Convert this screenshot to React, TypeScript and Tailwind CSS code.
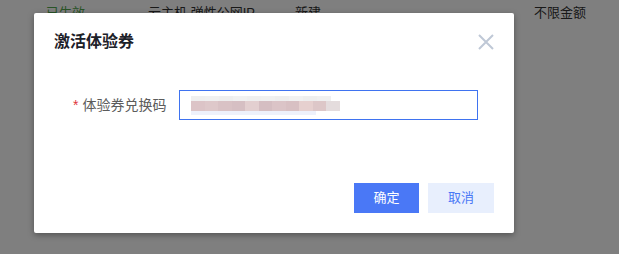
import React from 'react';

const font = { fontFamily: '"Liberation Sans", "Noto Sans CJK SC", sans-serif' };

const mosaicTop = ['#efefef', '#f0f0f0', '#eeeeee', '#f1f1f1', '#efefef', '#f0f0f0', '#eeeeee', '#f1f1f1', '#eeeeee', '#f0f0f0'];
const mosaicMid = ['#dcc4c7', '#dec8ca', '#d9c2c5', '#d6bfc3', '#e3cfd0', '#d5bec2', '#dbc4c7', '#d8c0c3', '#e6d0cf', '#ddc7c8', '#e4dcdd'];

const CodeMosaic: React.FC = () => {
  return (
    <div className="flex flex-col blur-[0.6px]">
      <div className="flex h-[5px]">
        {mosaicTop.map((c, i) => (
          <div key={i} className="w-[14px]" style={{ backgroundColor: c }} />
        ))}
      </div>
      <div className="flex h-[10px]">
        {mosaicMid.map((c, i) => (
          <div key={i} className="w-[13.5px]" style={{ backgroundColor: c }} />
        ))}
      </div>
      <div className="h-[4px] w-[125px] bg-[#eef1fb]" />
    </div>
  );
};

export default function App() {
  return (
    <div className="relative h-[254px] w-[619px] overflow-hidden bg-white" style={font}>
      {/* Page behind the modal */}
      <div className="flex h-[26px] items-center text-[13px] text-[#333]">
        <span className="ml-[46px] text-[#52a84e]">已生效</span>
        <span className="ml-[63px]">云主机 弹性公网IP</span>
        <span className="ml-[40px]">新建</span>
        <span className="ml-[213px]">不限金额</span>
      </div>

      {/* Backdrop */}
      <div className="absolute inset-0 bg-black/50">
        <div className="ml-[34px] mt-[13px] flex h-[220px] w-[480px] flex-col rounded-[2px] bg-white shadow-[0_2px_6px_rgba(0,0,0,0.35)]">
          <div className="flex items-start justify-between pl-5 pr-5 pt-[18px]">
            <h2 className="text-[16px] font-semibold leading-[22px] text-[#1d2129]">激活体验券</h2>
            <button type="button" className="mt-[3px] h-4 w-4 text-[#bfc8d6]">
              <svg viewBox="0 0 16 16" className="h-4 w-4" fill="none" stroke="currentColor" strokeWidth="2">
                <path d="M1 1 L15 15 M15 1 L1 15" />
              </svg>
            </button>
          </div>

          <div className="mt-[37px] flex items-center pl-[39px]">
            <span className="mr-[4px] text-[14px] text-[#e0363b]">*</span>
            <label className="text-[14px] text-[#5c5c5c]">体验券兑换码</label>
            <div className="ml-[13px] flex h-[30px] w-[299px] items-center border border-[#3f73f0] pl-[11px]">
              <CodeMosaic />
            </div>
          </div>

          <div className="mt-auto flex justify-end gap-[9px] pb-5 pr-5">
            <button type="button" className="h-[30px] w-[65px] bg-[#4a78f6] text-[13px] text-white">
              确定
            </button>
            <button type="button" className="h-[30px] w-[66px] bg-[#e8effd] text-[13px] text-[#4a78f6]">
              取消
            </button>
          </div>
        </div>
      </div>
    </div>
  );
}
